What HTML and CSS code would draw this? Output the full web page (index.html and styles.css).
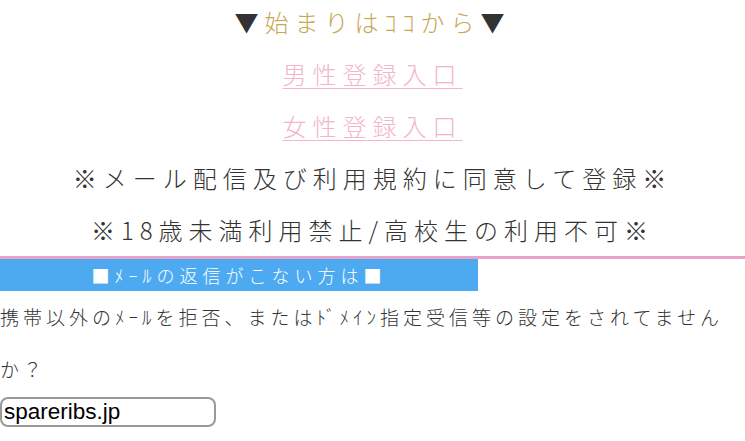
FILE: index.html
```html
<!DOCTYPE html>
<html lang="ja">
<head>
<meta charset="utf-8">
<link rel="stylesheet" href="styles.css">
</head>
<body>
<div class="intro">
  <p class="line"><span class="tri">▼</span><span class="gold">始まりはｺｺから</span><span class="tri">▼</span></p>
  <p class="line"><a class="reg" href="#">男性登録入口</a></p>
  <p class="line"><a class="reg" href="#">女性登録入口</a></p>
  <p class="line">※メール配信及び利用規約に同意して登録※</p>
  <p class="line">※18歳未満利用禁止/高校生の利用不可※</p>
</div>
<div class="notice">
  <div class="bar">■ﾒｰﾙの返信がこない方は■</div>
  <p class="desc">携帯以外のﾒｰﾙを拒否、またはﾄﾞﾒｲﾝ指定受信等の設定をされてませんか？</p>
  <input class="domain" type="text" value="spareribs.jp" readonly>
</div>
</body>
</html>
```
FILE: styles.css
```css
html, body {
  margin: 0;
  padding: 0;
  background: #fff;
}
body {
  font-family: "Noto Sans CJK JP", "Noto Sans", sans-serif;
  font-weight: 300;
  color: #333;
}
.intro {
  margin-top: -4px;
  text-align: center;
}
.line {
  margin: 0;
  font-size: 24px;
  line-height: 52px;
  letter-spacing: 0.25em;
  white-space: nowrap;
}
.line-first {
  padding-left: 8px;
}
.tri {
  color: #333;
}
.gold {
  color: #c9a655;
}
.reg {
  color: #f2b6c6;
  text-decoration: underline;
  text-decoration-thickness: 1px;
  text-underline-offset: 4px;
}
.notice {
  border-top: 3px solid #e8a3c9;
}
.bar {
  width: 478px;
  height: 32px;
  background: #4eaaf0;
  color: #fff;
  font-size: 18px;
  line-height: 32px;
  letter-spacing: 5px;
  text-align: center;
}
.desc {
  margin: 0;
  font-size: 19px;
  line-height: 52px;
  letter-spacing: 4px;
}
.domain {
  display: block;
  box-sizing: border-box;
  margin: 2px 0 0 0;
  width: 216px;
  height: 30px;
  padding: 0 2px;
  border: 2px solid #999;
  border-radius: 8px;
  font-family: "Liberation Sans", Arial, sans-serif;
  font-size: 22.5px;
  color: #000;
  background: #fff;
  outline: none;
}
```
